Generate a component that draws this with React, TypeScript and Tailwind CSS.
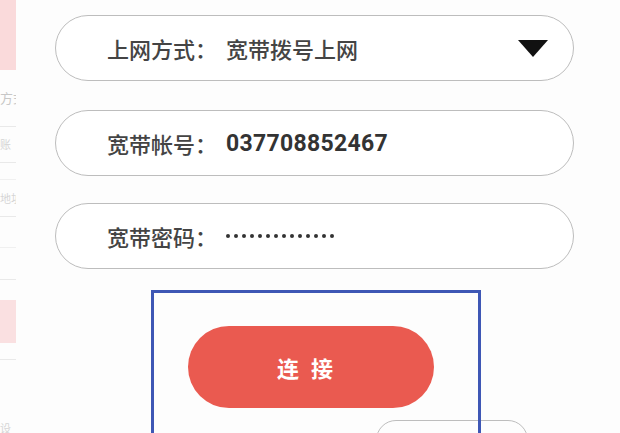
const Pill = ({ children, className = '' }: { children: React.ReactNode; className?: string }) => (
  <div className={`flex h-[66px] shrink-0 items-center rounded-full border-[1.5px] border-[#bdbdbd] bg-white pl-[51px] pr-[24px] ${className}`}>
    {children}
  </div>
);

const Label = ({ text }: { text: string }) => (
  <span className="w-[119px] shrink-0 text-[22px] font-medium leading-none text-[#444]">{text}</span>
);

export default function App() {
  return (
    <div
      className="flex h-[433px] w-[620px] overflow-hidden bg-[#fdfdfd]"
      style={{ fontFamily: '"Noto Sans CJK SC", "Noto Sans", sans-serif' }}
    >
      {/* faded drawer edge on the left */}
      <div className="flex w-[16px] shrink-0 flex-col overflow-hidden whitespace-nowrap opacity-40">
        <div className="h-[70px] shrink-0 bg-[#f6a8aa]" />
        <div className="flex h-[57px] shrink-0 items-center border-b border-[#ccc] text-[13px] text-[#777]">方式</div>
        <div className="flex h-[36px] shrink-0 items-center border-b border-[#ccc] text-[11px] text-[#999]">账</div>
        <div className="h-[17px] shrink-0 border-b border-[#ddd]" />
        <div className="flex h-[37px] shrink-0 items-center border-b border-[#ccc] text-[11px] text-[#999]">地址</div>
        <div className="h-[31px] shrink-0 border-b border-[#ddd]" />
        <div className="h-[32px] shrink-0 border-b border-[#ccc]" />
        <div className="h-[20px] shrink-0" />
        <div className="h-[43px] shrink-0 bg-[#f8b6b8]" />
        <div className="h-[17px] shrink-0 border-b border-[#ccc]" />
        <div className="mt-[60px] shrink-0 text-[11px] text-[#999]">设</div>
      </div>

      <div className="ml-[39px] flex w-[519px] shrink-0 flex-col">
        <Pill className="mt-[15px]">
          <Label text="上网方式：" />
          <span className="text-[22px] font-medium leading-none text-[#444]">宽带拨号上网</span>
          <svg className="ml-auto mr-[1px]" width="30" height="17" viewBox="0 0 30 17">
            <path d="M0 0 H30 L15 17 Z" fill="#111" />
          </svg>
        </Pill>

        <Pill className="mt-[29px]">
          <Label text="宽带帐号：" />
          <span
            className="text-[23px] font-bold leading-none tracking-[0.3px] text-[#333]"
            style={{ fontFamily: 'Roboto, "Noto Sans", sans-serif' }}
          >
            037708852467
          </span>
        </Pill>

        <Pill className="mt-[27px]">
          <Label text="宽带密码：" />
          <span className="flex gap-[4px]">
            {Array.from({ length: 14 }).map((_, i) => (
              <span key={i} className="h-[4px] w-[4px] rounded-full bg-[#333]" />
            ))}
          </span>
        </Pill>

        <div className="relative mt-[21px] shrink-0">
          <div className="ml-[133px] mt-[36px] flex h-[82px] w-[246px] items-center justify-center rounded-full bg-[#ea5a50]">
            <span className="text-[22px] font-bold tracking-[12px] text-white">连接</span>
          </div>
          <div className="ml-[321px] mt-[12px] h-[40px] w-[152px] rounded-full border-[1.5px] border-[#bdbdbd]" />
          <div className="absolute left-[96px] top-0 h-[200px] w-[330px] border-[3px] border-[#3e57b5]" />
        </div>
      </div>
    </div>
  );
}
